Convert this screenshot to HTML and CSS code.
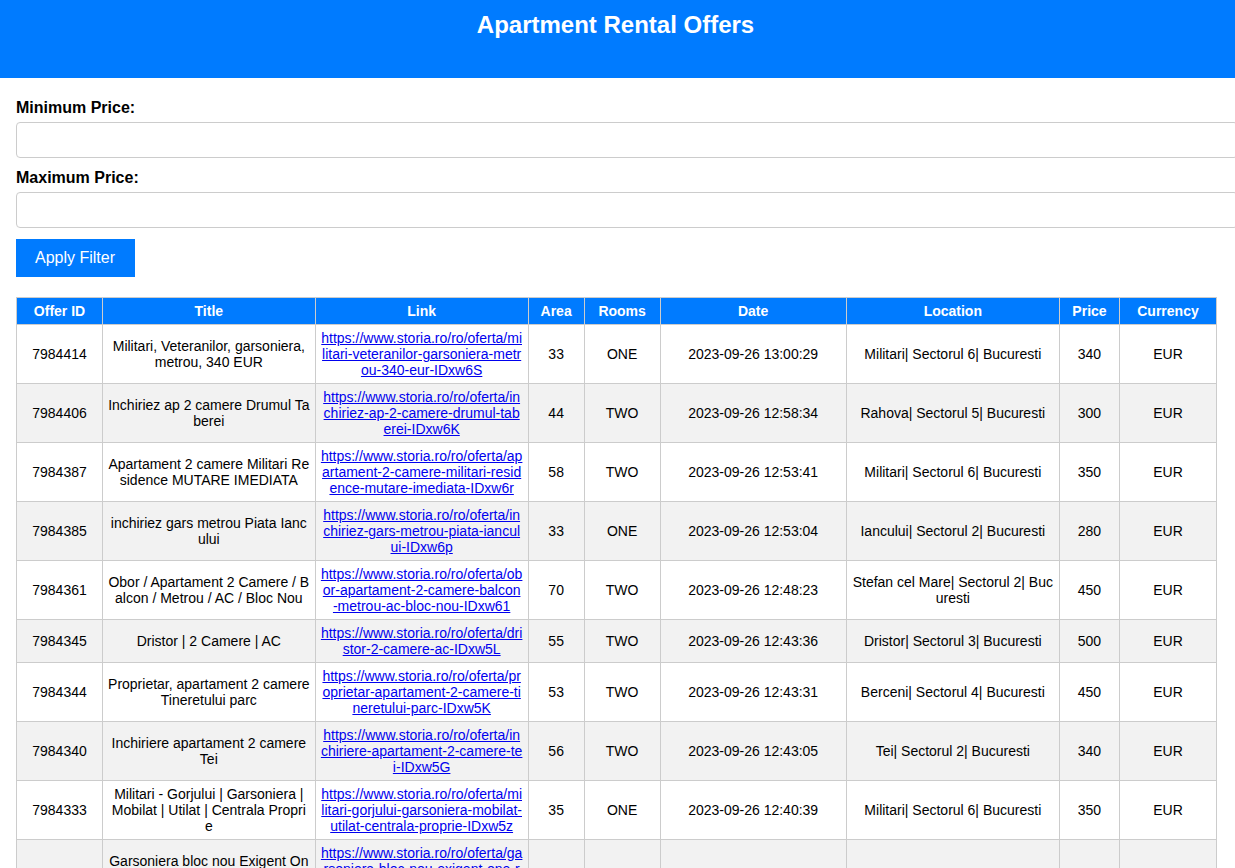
FILE: index.html
```html
<!DOCTYPE html>
<html lang="en">
<head>
<meta charset="utf-8">
<title>Apartment Rental Offers</title>
<link rel="stylesheet" href="styles.css">
</head>
<body>
<header class="site-header">
  <h1 class="site-title">Apartment Rental Offers</h1>
</header>
<main class="container">
  <form class="filter-form">
    <label class="field-label" for="minPrice">Minimum Price:</label>
    <input class="field-input" type="number" id="minPrice">
    <label class="field-label" for="maxPrice">Maximum Price:</label>
    <input class="field-input" type="number" id="maxPrice">
    <button class="btn-apply" type="button">Apply Filter</button>
  </form>
  <table class="offers">
    <colgroup>
      <col class="c-id"><col class="c-title"><col class="c-link"><col class="c-area"><col class="c-rooms"><col class="c-date"><col class="c-loc"><col class="c-price"><col class="c-cur">
    </colgroup>
    <thead>
      <tr><th>Offer ID</th><th>Title</th><th>Link</th><th>Area</th><th>Rooms</th><th>Date</th><th>Location</th><th>Price</th><th>Currency</th></tr>
    </thead>
    <tbody>
      <tr><td>7984414</td><td>Militari, Veteranilor, garsoniera, metrou, 340 EUR</td><td><a href="#">https://www.storia.ro/ro/oferta/militari-veteranilor-garsoniera-metrou-340-eur-IDxw6S</a></td><td>33</td><td>ONE</td><td>2023-09-26 13:00:29</td><td>Militari| Sectorul 6| Bucuresti</td><td>340</td><td>EUR</td></tr>
      <tr><td>7984406</td><td>Inchiriez ap 2 camere Drumul Taberei</td><td><a href="#">https://www.storia.ro/ro/oferta/inchiriez-ap-2-camere-drumul-taberei-IDxw6K</a></td><td>44</td><td>TWO</td><td>2023-09-26 12:58:34</td><td>Rahova| Sectorul 5| Bucuresti</td><td>300</td><td>EUR</td></tr>
      <tr><td>7984387</td><td>Apartament 2 camere Militari Residence MUTARE IMEDIATA</td><td><a href="#">https://www.storia.ro/ro/oferta/apartament-2-camere-militari-residence-mutare-imediata-IDxw6r</a></td><td>58</td><td>TWO</td><td>2023-09-26 12:53:41</td><td>Militari| Sectorul 6| Bucuresti</td><td>350</td><td>EUR</td></tr>
      <tr><td>7984385</td><td>inchiriez gars metrou Piata Iancului</td><td><a href="#">https://www.storia.ro/ro/oferta/inchiriez-gars-metrou-piata-iancului-IDxw6p</a></td><td>33</td><td>ONE</td><td>2023-09-26 12:53:04</td><td>Iancului| Sectorul 2| Bucuresti</td><td>280</td><td>EUR</td></tr>
      <tr><td>7984361</td><td>Obor / Apartament 2 Camere / Balcon / Metrou / AC / Bloc Nou</td><td><a href="#">https://www.storia.ro/ro/oferta/obor-apartament-2-camere-balcon-metrou-ac-bloc-nou-IDxw61</a></td><td>70</td><td>TWO</td><td>2023-09-26 12:48:23</td><td>Stefan cel Mare| Sectorul 2| Bucuresti</td><td>450</td><td>EUR</td></tr>
      <tr><td>7984345</td><td>Dristor | 2 Camere | AC</td><td><a href="#">https://www.storia.ro/ro/oferta/dristor-2-camere-ac-IDxw5L</a></td><td>55</td><td>TWO</td><td>2023-09-26 12:43:36</td><td>Dristor| Sectorul 3| Bucuresti</td><td>500</td><td>EUR</td></tr>
      <tr><td>7984344</td><td>Proprietar, apartament 2 camere Tineretului parc</td><td><a href="#">https://www.storia.ro/ro/oferta/proprietar-apartament-2-camere-tineretului-parc-IDxw5K</a></td><td>53</td><td>TWO</td><td>2023-09-26 12:43:31</td><td>Berceni| Sectorul 4| Bucuresti</td><td>450</td><td>EUR</td></tr>
      <tr><td>7984340</td><td>Inchiriere apartament 2 camere Tei</td><td><a href="#">https://www.storia.ro/ro/oferta/inchiriere-apartament-2-camere-tei-IDxw5G</a></td><td>56</td><td>TWO</td><td>2023-09-26 12:43:05</td><td>Tei| Sectorul 2| Bucuresti</td><td>340</td><td>EUR</td></tr>
      <tr><td>7984333</td><td>Militari - Gorjului | Garsoniera | Mobilat | Utilat | Centrala Proprie</td><td><a href="#">https://www.storia.ro/ro/oferta/militari-gorjului-garsoniera-mobilat-utilat-centrala-proprie-IDxw5z</a></td><td>35</td><td>ONE</td><td>2023-09-26 12:40:39</td><td>Militari| Sectorul 6| Bucuresti</td><td>350</td><td>EUR</td></tr>
      <tr><td>7984329</td><td>Garsoniera bloc nou Exigent One Residence, centrala proprie, metrou</td><td><a href="#">https://www.storia.ro/ro/oferta/garsoniera-bloc-nou-exigent-one-residence-militari-metrou-gorjului-IDxw5v</a></td><td>32</td><td>ONE</td><td>2023-09-26 12:38:12</td><td>Militari| Sectorul 6| Bucuresti</td><td>330</td><td>EUR</td></tr>
    </tbody>
  </table>
</main>
</body>
</html>
```

FILE: styles.css
```css
html, body {
  overflow-x: hidden;
}

body {
  margin: 0;
  font-family: "Liberation Sans", Arial, sans-serif;
  color: #000;
  background: #fff;
}

.site-header {
  background: #007bff;
  color: #fff;
  text-align: center;
  padding: 11px 20px 39px 16px;
}

.site-title {
  margin: 0;
  font-size: 24px;
  font-weight: bold;
}

.container {
  padding: 21px 19px 20px 16px;
}

.filter-form {
  margin: 0 0 20px;
}

.field-label {
  display: block;
  font-size: 16px;
  line-height: 18px;
  font-weight: bold;
  margin-bottom: 5px;
}

.field-input {
  display: block;
  width: 100%;
  box-sizing: content-box;
  height: 18px;
  padding: 8px 10px;
  margin: 0 0 11px;
  border: 1px solid #ccc;
  border-radius: 4px;
  font-size: 16px;
  font-family: inherit;
}

.btn-apply {
  display: block;
  margin-top: 11px;
  padding: 10px 20px 10px 19px;
  height: 38px;
  background: #007bff;
  color: #fff;
  border: none;
  border-radius: 0;
  font-size: 16px;
  font-family: inherit;
  line-height: 18px;
  cursor: pointer;
}

.offers {
  width: 1200px;
  table-layout: fixed;
  border-collapse: collapse;
  font-size: 14px;
}

.c-id { width: 86px; }
.c-title { width: 212.65px; }
.c-link { width: 213px; }
.c-area { width: 56px; }
.c-rooms { width: 76px; }
.c-date { width: 186px; }
.c-loc { width: 213.35px; }
.c-price { width: 60px; }
.c-cur { width: 97px; }

.offers th,
.offers td {
  border: 1px solid #ccc;
  padding: 5px;
  text-align: center;
  vertical-align: middle;
  line-height: 16px;
  word-break: break-all;
}

.offers th {
  background: #007bff;
  color: #fff;
  font-weight: bold;
}

.offers tbody tr:nth-child(even) {
  background: #f2f2f2;
}

.offers a {
  color: #0000ee;
  text-decoration: underline;
}
```
